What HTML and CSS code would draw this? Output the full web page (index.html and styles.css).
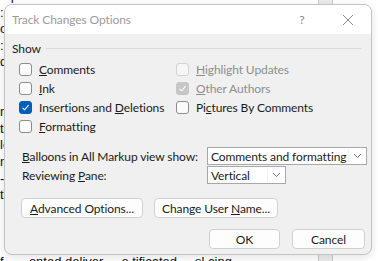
FILE: index.html
```html
<!DOCTYPE html>
<html lang="en">
<head>
    <meta charset="UTF-8">
    <title>Track Changes Options</title>
    <link rel="stylesheet" href="styles.css">
</head>
<body>
    <div class="doc">
        <p>squawk":9l</p>
        <p>:</p>
        <p>o</p>
        <p>:</p>
        <p>d-</p>
        <p>&nbsp;</p>
        <p>&nbsp;</p>
        <p>n</p>
        <p>t</p>
        <p>le</p>
        <p>ni</p>
        <p>-s</p>
        <p>t</p>
        <p>&nbsp;</p>
        <p>&nbsp;</p>
        <p>&nbsp;</p>
        <p>f ......ented deliver ... e tificated ... sl cing</p>
    </div>

    <div class="dialog">
        <div class="titlebar">
            <span class="title">Track Changes Options</span>
            <span class="tb-btn">?</span>
            <span class="tb-btn close">
                <svg width="12" height="12" viewBox="0 0 12 12"><path d="M1 1 L11 11 M11 1 L1 11" stroke="#8a8a8a" stroke-width="1"/></svg>
            </span>
        </div>
        <div class="body">
            <div class="group-head"><span>Show</span><span class="rule"></span></div>
            <div class="checks">
                <label class="check"><span class="box"></span><span><u>C</u>omments</span></label>
                <label class="check disabled"><span class="box"></span><span><u>H</u>ighlight Updates</span></label>
                <label class="check"><span class="box"></span><span><u>I</u>nk</span></label>
                <label class="check disabled"><span class="box on"><svg width="9" height="9" viewBox="0 0 9 9"><path d="M1.5 4.8 L3.6 6.8 L7.6 2.2" fill="none" stroke="#fff" stroke-width="1.1"/></svg></span><span><u>O</u>ther Authors</span></label>
                <label class="check"><span class="box on"><svg width="9" height="9" viewBox="0 0 9 9"><path d="M1.5 4.8 L3.6 6.8 L7.6 2.2" fill="none" stroke="#fff" stroke-width="1.1"/></svg></span><span>Insertions and <u>D</u>eletions</span></label>
                <label class="check"><span class="box"></span><span>Pi<u>c</u>tures By Comments</span></label>
                <label class="check"><span class="box"></span><span><u>F</u>ormatting</span></label>
            </div>
            <div class="fields">
                <span><u>B</u>alloons in All Markup view show:</span>
                <div class="select wide"><span class="val">Comments and formatting</span><span class="arrow"><svg width="9" height="6" viewBox="0 0 9 6"><path d="M1 1 L4.5 4.5 L8 1" fill="none" stroke="#777" stroke-width="1"/></svg></span></div>
                <span>Reviewing <u>P</u>ane:</span>
                <div class="select narrow"><span class="val">Vertical</span><span class="arrow"><svg width="9" height="6" viewBox="0 0 9 6"><path d="M1 1 L4.5 4.5 L8 1" fill="none" stroke="#777" stroke-width="1"/></svg></span></div>
            </div>
            <div class="actions">
                <button class="btn adv"><u>A</u>dvanced Options...</button>
                <button class="btn user">Change User <u>N</u>ame...</button>
            </div>
            <div class="footer">
                <button class="btn ok">OK</button>
                <button class="btn cancel">Cancel</button>
            </div>
        </div>
    </div>
</body>
</html>
```

FILE: styles.css
```css
body {
    margin: 0;
    width: 378px;
    height: 261px;
    overflow: hidden;
    position: relative;
    font-family: Lato, sans-serif;
    font-size: 12px;
    letter-spacing: -0.1px;
    color: #1b1b1b;
    background: #fff;
}

.doc {
    height: 273px;
    margin-top: -12px;
    font-family: "Liberation Sans", sans-serif;
    font-size: 13px;
    letter-spacing: 0;
    color: #111;
    background: linear-gradient(90deg, transparent 318px, #c9c9c9 318px, #c9c9c9 319px, #ececec 319px, #ececec 332px, #c9c9c9 332px, #c9c9c9 333px, transparent 333px);
}

.doc p {
    margin: 0;
    line-height: 16.6px;
    white-space: nowrap;
}

.dialog {
    position: absolute;
    left: 4px;
    top: 4px;
    width: 366px;
    height: 249px;
    border: 1px solid #c4c4c4;
    border-radius: 8px;
    background: #f0f0f0;
    overflow: hidden;
    box-shadow: 0 2px 8px rgba(0, 0, 0, 0.12);
    white-space: nowrap;
}

.titlebar {
    height: 29px;
    background: #fff;
    display: flex;
    align-items: center;
    padding-left: 7px;
}

.title {
    flex: 1;
    color: #9b9b9b;
}

.tb-btn {
    width: 46px;
    text-align: center;
    color: #8a8a8a;
}

.tb-btn.close {
    display: flex;
    justify-content: center;
}

.body {
    padding: 6px 6px 0 7px;
}

.group-head {
    display: flex;
    align-items: center;
    height: 16px;
}

.group-head .rule {
    flex: 1;
    height: 1px;
    background: #d9d9d9;
    margin: 0 4px 0 5px;
}

.checks {
    display: grid;
    grid-template-columns: 157px 180px;
    grid-auto-rows: 19px;
    margin: 4px 0 0 7px;
}

.check {
    display: flex;
    align-items: center;
}

.box {
    width: 11px;
    height: 11px;
    border: 1px solid #8c8c8c;
    border-radius: 3px;
    background: #fbfbfb;
    margin-right: 7px;
    display: flex;
    align-items: center;
    justify-content: center;
    flex: none;
}

.box.on {
    background: #005fb8;
    border-color: #005fb8;
}

.check.disabled {
    color: #8e8e8e;
}

.check.disabled .box {
    border-color: #d2d2d2;
    background: #f6f6f6;
}

.check.disabled .box.on {
    background: #c6c6c6;
    border-color: #c6c6c6;
}

.fields {
    display: grid;
    grid-template-columns: 185px 160px;
    grid-auto-rows: 18px;
    row-gap: 1px;
    align-items: center;
    margin: 11px 0 0 10px;
}

.select {
    height: 16px;
    border: 1px solid #a8a8a8;
    background: #fff;
    display: flex;
    align-items: center;
}

.select.wide { width: 158px; }
.select.narrow { width: 77px; }

.select .val {
    flex: 1;
    padding-left: 3px;
}

.select .arrow {
    width: 17px;
    height: 14px;
    border-left: 1px solid #f0f0f0;
    display: flex;
    align-items: center;
    justify-content: center;
}

.actions {
    display: flex;
    gap: 11px;
    margin: 14px 0 0 9px;
}

.btn {
    height: 20px;
    padding: 0;
    border: 1px solid #d0d0d0;
    border-radius: 4px;
    background: #fdfdfd;
    font-family: Lato, sans-serif;
    font-size: 12px;
    letter-spacing: -0.1px;
    color: #1b1b1b;
}

.btn.adv { width: 122px; }
.btn.user { width: 124px; }
.btn.ok { width: 71px; }
.btn.cancel { width: 73px; }

.footer {
    display: flex;
    justify-content: flex-end;
    gap: 12px;
    margin-top: 11px;
}
```
